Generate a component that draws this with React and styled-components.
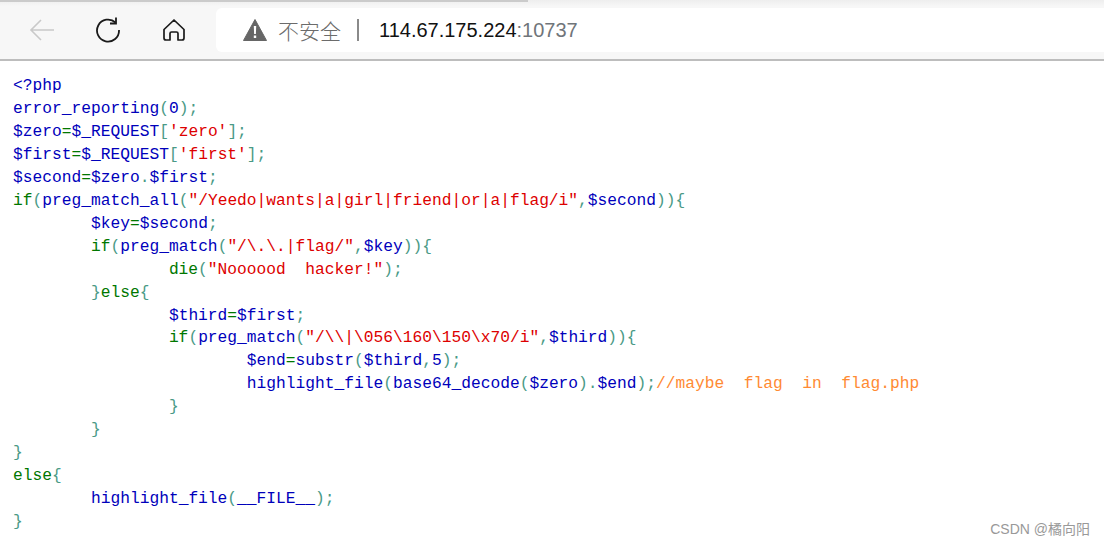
import styled, { createGlobalStyle } from "styled-components"

const GlobalStyle = createGlobalStyle`
  html, body {
    margin: 0;
    padding: 0;
    background: #fff;
  }
`

const Page = styled.div`
  width: 1104px;
  height: 545px;
  position: relative;
  overflow: hidden;
  background: #fff;
`

const Toolbar = styled.div`
  height: 56px;
  padding: 2px 0 1px;
  display: flex;
  align-items: center;
  background:
    linear-gradient(#cbcbcb, #cbcbcb) 0 0 / 528px 2px no-repeat,
    linear-gradient(#eeeeee, #f7f7f7) 0 0 / 100% 6px no-repeat,
    #f7f7f7;
  border-bottom: 2px solid #bdbdbd;
`

const NavButton = styled.div`
  width: ${props => props.$w}px;
  height: 44px;
  flex: none;
  display: flex;
  align-items: center;
  justify-content: center;
  color: ${props => props.$muted ? "#c9c9c9" : "#1a1a1a"};
`

const AddressBar = styled.div`
  flex: 1;
  height: 44px;
  display: flex;
  align-items: center;
  padding-left: 27px;
  background: #fff;
  border-radius: 6px 0 0 6px;
  font-family: "Liberation Sans", "Noto Sans CJK SC", sans-serif;
  font-size: 20px;
`

const Insecure = styled.span`
  margin-left: 11px;
  color: #6b6b6b;
  font-family: "Noto Sans CJK SC", sans-serif;
  font-size: 21px;
  font-weight: 300;
`

const Divider = styled.span`
  width: 2px;
  height: 22px;
  margin: 0 20px 0 16px;
  background: #8a8a8a;
`

const Host = styled.span`
  color: #111;
`

const Port = styled.span`
  color: #70757a;
`

const Code = styled.pre`
  margin: 14px 0 0 13px;
  font-family: "Liberation Mono", monospace;
  font-size: 16.24px;
  line-height: 22.95px;
`

const Token = styled.span`
  color: ${props => ({ k: "#007700", p: "#4a9a86", d: "#0000bb", s: "#dd0000", c: "#ff8a33" })[props.$t]};
`

const Watermark = styled.div`
  position: absolute;
  right: 14px;
  bottom: 7px;
  color: #999;
  font-family: "Liberation Sans", "Noto Sans CJK SC", sans-serif;
  font-size: 14px;
`

const lines = [
  [["d", "<?php"]],
  [["d", "error_reporting"], ["p", "("], ["d", "0"], ["p", ");"]],
  [["d", "$zero"], ["k", "="], ["d", "$_REQUEST"], ["p", "["], ["s", "'zero'"], ["p", "];"]],
  [["d", "$first"], ["k", "="], ["d", "$_REQUEST"], ["p", "["], ["s", "'first'"], ["p", "];"]],
  [["d", "$second"], ["k", "="], ["d", "$zero"], ["p", "."], ["d", "$first"], ["p", ";"]],
  [["k", "if"], ["p", "("], ["d", "preg_match_all"], ["p", "("], ["s", "\"/Yeedo|wants|a|girl|friend|or|a|flag/i\""], ["p", ","], ["d", "$second"], ["p", ")){"]],
  [["k", "        "], ["d", "$key"], ["k", "="], ["d", "$second"], ["p", ";"]],
  [["k", "        if"], ["p", "("], ["d", "preg_match"], ["p", "("], ["s", "\"/\\.\\.|flag/\""], ["p", ","], ["d", "$key"], ["p", ")){"]],
  [["k", "                die"], ["p", "("], ["s", "\"Noooood  hacker!\""], ["p", ");"]],
  [["p", "        }"], ["k", "else"], ["p", "{"]],
  [["k", "                "], ["d", "$third"], ["k", "="], ["d", "$first"], ["p", ";"]],
  [["k", "                if"], ["p", "("], ["d", "preg_match"], ["p", "("], ["s", "\"/\\\\|\\056\\160\\150\\x70/i\""], ["p", ","], ["d", "$third"], ["p", ")){"]],
  [["k", "                        "], ["d", "$end"], ["k", "="], ["d", "substr"], ["p", "("], ["d", "$third"], ["p", ","], ["d", "5"], ["p", ");"]],
  [["k", "                        "], ["d", "highlight_file"], ["p", "("], ["d", "base64_decode"], ["p", "("], ["d", "$zero"], ["p", ")."], ["d", "$end"], ["p", ");"], ["c", "//maybe  flag  in  flag.php"]],
  [["p", "                }"]],
  [["p", "        }"]],
  [["p", "}"]],
  [["k", "else"], ["p", "{"]],
  [["k", "        "], ["d", "highlight_file"], ["p", "("], ["d", "__FILE__"], ["p", ");"]],
  [["p", "}"]],
]

function App() {
  return (
    <Page>
      <GlobalStyle />
      <Toolbar>
        <NavButton $w={84} $muted>
          <svg width="26" height="26" viewBox="0 0 26 26" fill="none" stroke="currentColor" strokeWidth="1.6">
            <path d="M25 13H2M12 3L2 13l10 10" />
          </svg>
        </NavButton>
        <NavButton $w={48}>
          <svg width="26" height="26" viewBox="0 0 26 26" fill="none" stroke="currentColor" strokeWidth="1.8">
            <path d="M20.5 5.5A11 11 0 1 0 24 13" />
            <path d="M21 0.5V6.5H15" />
          </svg>
        </NavButton>
        <NavButton $w={84}>
          <svg width="24" height="24" viewBox="0 0 24 24" fill="none" stroke="currentColor" strokeWidth="1.7" strokeLinejoin="round">
            <path d="M2 11.5L12 2l10 9.5V20a2 2 0 0 1-2 2h-4v-6.5a1.5 1.5 0 0 0-1.5-1.5h-5A1.5 1.5 0 0 0 8 15.5V22H4a2 2 0 0 1-2-2z" />
          </svg>
        </NavButton>
        <AddressBar>
          <svg width="24" height="22" viewBox="0 0 24 22">
            <path d="M12 0.5L23.5 21.5H0.5z" fill="#666" stroke="#666" strokeLinejoin="round" />
            <path d="M10.8 7h2.4l-.3 8h-1.8zM10.8 16.5h2.4v2.5h-2.4z" fill="#fff" />
          </svg>
          <Insecure>不安全</Insecure>
          <Divider />
          <Host>114.67.175.224</Host>
          <Port>:10737</Port>
        </AddressBar>
      </Toolbar>
      <Code>
        {lines.map((line, i) => (
          <div key={i}>
            {line.map(([t, text], j) => <Token key={j} $t={t}>{text}</Token>)}
          </div>
        ))}
      </Code>
      <Watermark>CSDN @橘向阳</Watermark>
    </Page>
  )
}

export default App
